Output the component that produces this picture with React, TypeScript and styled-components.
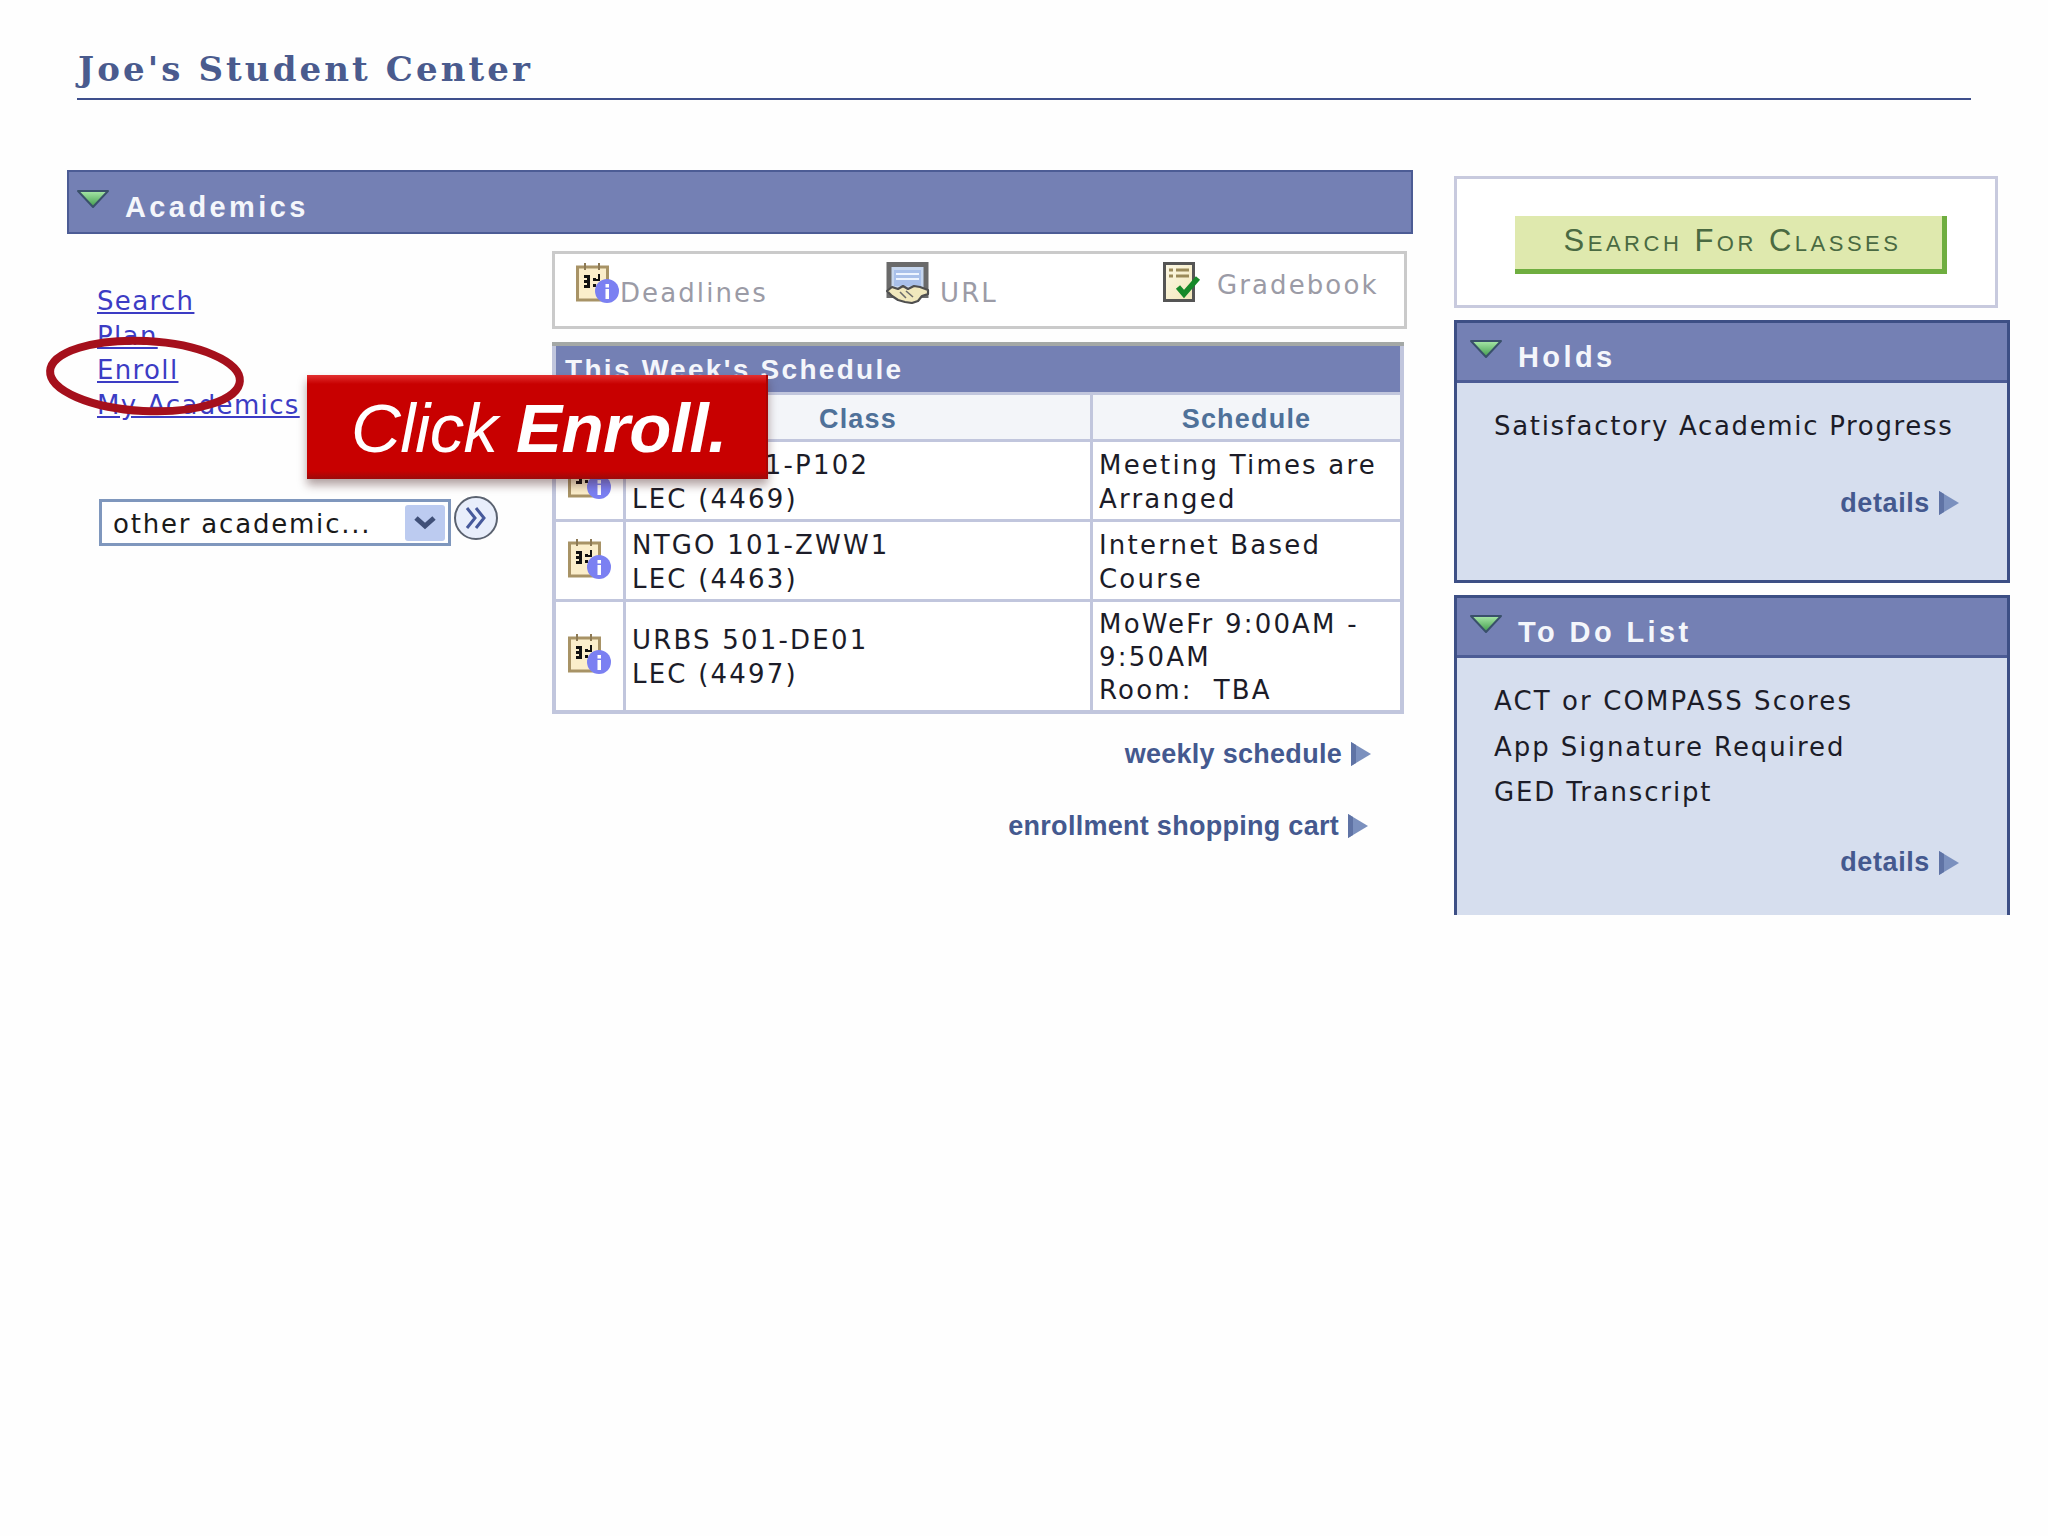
import * as React from 'react';
import styled, { createGlobalStyle } from 'styled-components';

const Global = createGlobalStyle`
  html, body { margin: 0; padding: 0; background: #fefefe; }
  body { font-family: "DejaVu Sans", Verdana, sans-serif; }
`;

const Page = styled.div`
  position: relative;
  width: 2048px;
  height: 1536px;
  padding: 47px 0 0 67px;
  box-sizing: border-box;
  overflow: hidden;
`;

const Title = styled.h1`
  margin: 0 0 70px 10px;
  padding-left: 1px;
  width: 1893px;
  height: 51px;
  border-bottom: 2px solid #3e4f8c;
  font-family: "DejaVu Serif", serif;
  font-size: 34px;
  line-height: 44px;
  font-weight: bold;
  letter-spacing: 3.1px;
  color: #4a5b8e;
`;

const Columns = styled.div`
  display: flex;
  gap: 41px;
  align-items: flex-start;
`;

const Main = styled.section`
  width: 1346px;
`;

const Side = styled.aside`
  width: 556px;
  padding-top: 6px;
  display: flex;
  flex-direction: column;
  gap: 12px;
`;

const Bar = styled.header<{ $flat?: boolean }>`
  display: flex;
  align-items: flex-start;
  height: ${p => (p.$flat ? 60 : 64)}px;
  box-sizing: border-box;
  background: #7480b4;
  border: 2px solid #4c5c95;
  border-width: ${p => (p.$flat ? '0 0 3px 0' : '2px')};
  padding: ${p => (p.$flat ? '16px 0 0 12px' : '17px 0 0 7px')};
  h2 {
    margin: ${p => (p.$flat ? 1 : 1)}px 0 0 15px;
    font-family: "Liberation Sans", sans-serif;
    font-size: 29px;
    line-height: 34px;
    letter-spacing: 3.4px;
    font-weight: bold;
    color: #f4f6fb;
  }
`;

const AcademicsBody = styled.div`
  display: flex;
  margin-top: 17px;
`;

const LeftNav = styled.div`
  width: 485px;
  box-sizing: border-box;
  padding: 33px 0 0 30px;
`;

const NavLink = styled.a`
  display: block;
  width: fit-content;
  height: 34.5px;
  font-size: 26px;
  line-height: 34px;
  letter-spacing: 1.35px;
  color: #3c3cc4;
  text-decoration: underline;
`;

const SelectRow = styled.div`
  display: flex;
  align-items: flex-start;
  gap: 3px;
  margin: 77px 0 0 2px;
`;

const SelectBox = styled.div`
  width: 352px;
  height: 47px;
  box-sizing: border-box;
  border: 3px solid #7f97bd;
  background: #fff;
  display: flex;
  align-items: center;
  justify-content: space-between;
  padding: 0 3px 0 11px;
  font-size: 26px;
  letter-spacing: 1.8px;
  color: #1a1a1a;
`;

const SelectText = styled.span`
  padding-top: 3px;
`;

const SelectArrow = styled.span`
  display: flex;
  align-items: center;
  justify-content: center;
  width: 40px;
  height: 36px;
  border-radius: 3px;
  background: #bccbf0;
`;

const GoButton = styled.span`
  margin-top: -3px;
  width: 44px;
  height: 44px;
  box-sizing: border-box;
  border: 2px solid #5a6270;
  border-radius: 50%;
  background: #e8eefb;
  display: flex;
  align-items: center;
  justify-content: center;
`;

const Content = styled.div`
  width: 855px;
`;

const Tabs = styled.div`
  display: grid;
  grid-template-columns: 310px 277px 1fr;
  height: 78px;
  box-sizing: border-box;
  border: 3px solid #cacaca;
  padding: 8px 0 0 21px;
  background: #fff;
`;

const TabItem = styled.div<{ $gap: number }>`
  display: flex;
  align-items: flex-start;
  gap: ${p => p.$gap}px;
`;

const TabLabel = styled.span<{ $top: number }>`
  margin-top: ${p => p.$top}px;
  font-size: 26px;
  line-height: 34px;
  letter-spacing: 2.1px;
  color: #9b9ba6;
`;

const Schedule = styled.div`
  margin-top: 13px;
  width: 852px;
  box-sizing: border-box;
  background: #c1c6dd;
  border-top: 4px solid #a4a8a6;
  padding: 0 4px 4px;
  display: grid;
  grid-template-columns: 67px 464px 1fr;
  grid-template-rows: 46px 44px 77px 77px 108px;
  gap: 3px;
`;

const Band = styled.div`
  grid-column: 1 / -1;
  background: #7480b4;
  padding-left: 9px;
  font-family: "Liberation Sans", sans-serif;
  font-size: 28px;
  line-height: 48px;
  font-weight: bold;
  letter-spacing: 2.3px;
  color: #f4f6fb;
`;

const HeadCell = styled.div`
  background: #f3f5f9;
  text-align: center;
  font-family: "Liberation Sans", sans-serif;
  font-size: 27px;
  line-height: 49px;
  font-weight: bold;
  letter-spacing: 1.2px;
  color: #4f7199;
`;

const IconCell = styled.div`
  background: #fff;
  display: flex;
  align-items: center;
  justify-content: center;
  padding-bottom: 4px;
`;

const TextCell = styled.div<{ $line: number }>`
  background: #fff;
  display: flex;
  flex-direction: column;
  justify-content: center;
  padding: 2px 0 0 6px;
  font-size: 26px;
  line-height: ${p => p.$line}px;
  letter-spacing: 2.2px;
  color: #1c1c28;
  white-space: pre;
`;

const MoreLink = styled.div<{ $right: number; $top: number }>`
  display: flex;
  justify-content: flex-end;
  align-items: center;
  gap: 8px;
  margin: ${p => p.$top}px ${p => p.$right}px 0 0;
  height: 34px;
  font-family: "Liberation Sans", sans-serif;
  font-size: 27px;
  font-weight: bold;
  letter-spacing: 0.28px;
  color: #44598f;
`;

const SearchBox = styled.div`
  width: 544px;
  height: 132px;
  box-sizing: border-box;
  border: 3px solid #c8cade;
  background: #fff;
  padding: 37px 0 0 58px;
`;

const SearchButton = styled.div`
  width: 432px;
  height: 58px;
  box-sizing: border-box;
  background: #dfe9ae;
  border-right: 5px solid #6fae40;
  border-bottom: 5px solid #6fae40;
  padding-left: 8px;
  text-align: center;
  font-family: "Liberation Sans", sans-serif;
  font-size: 31px;
  font-variant: small-caps;
  line-height: 50px;
  letter-spacing: 3.5px;
  color: #4a6a42;
`;

const Panel = styled.div<{ $height: number; $open?: boolean }>`
  height: ${p => p.$height}px;
  box-sizing: border-box;
  background: #d6deee;
  border: 3px solid #3d4f85;
  border-bottom: ${p => (p.$open ? 'none' : '3px solid #3d4f85')};
`;

const PanelBody = styled.div<{ $top: number }>`
  padding: ${p => p.$top}px 47px 0 37px;
`;

const PanelLine = styled.div<{ $height: number; $spacing: number }>`
  font-size: 26px;
  line-height: ${p => p.$height}px;
  letter-spacing: ${p => p.$spacing}px;
  color: #1c1c28;
`;

const Details = styled(MoreLink)`
  margin-right: 0;
  letter-spacing: 0.6px;
`;

const ClickCallout = styled.div`
  position: absolute;
  left: 307px;
  top: 375px;
  width: 461px;
  height: 104px;
  box-sizing: border-box;
  background: linear-gradient(#e23030 0, #c80000 9px, #c80000 96px, #9c0a0a 100%);
  border-right: 2px solid #a80505;
  box-shadow: 0 6px 9px rgba(60, 20, 20, 0.4);
  padding: 6px 0 0 44px;
  font-family: "Liberation Sans", sans-serif;
  font-size: 69px;
  line-height: 96px;
  font-style: italic;
  letter-spacing: -0.6px;
  color: #fff;
  b { font-weight: bold; }
`;

const Ring = styled.svg`
  position: absolute;
  left: 44px;
  top: 332px;
`;

const Triangle = () => (
  <svg width="34" height="20" viewBox="0 0 34 20">
    <defs>
      <linearGradient id="tri" x1="0" y1="0" x2="0" y2="1">
        <stop offset="0" stopColor="#a8e8a8" />
        <stop offset="1" stopColor="#3f9a4a" />
      </linearGradient>
    </defs>
    <path d="M2 2 H32 L17 18 Z" fill="url(#tri)" stroke="#39506a" strokeWidth="2" strokeLinejoin="round" />
  </svg>
);

const Arrow = () => (
  <svg width="22" height="26" viewBox="0 0 22 26">
    <path d="M1 1 L21 13 L1 25 Z" fill="#7b90be" />
    <path d="M1 1 V25 L6 22 V4 Z" fill="#5f73a5" />
  </svg>
);

const CalendarInfo = () => (
  <svg width={44} height={42} viewBox="0 0 44 42">
    <rect x="1.5" y="5" width="30" height="33" fill="#fbeecb" stroke="#a89366" strokeWidth="3" />
    <path d="M9 1 V8 M23 1 V8" stroke="#8d7a55" strokeWidth="2" />
    <path d="M8 13 H14 V26 H8 V23 H11 V21 H8 V18 H11 V16 H8 Z M17 16 H20 V19 H17 Z M17 22 H20 V25 H17 Z M22 12 H24 V19 H20 V17 H22 Z" fill="#111" />
    <circle cx="31" cy="29" r="12" fill="#7b80f2" />
    <rect x="29.5" y="22" width="3.5" height="3.5" fill="#fff" />
    <rect x="29.5" y="27" width="3.5" height="10" fill="#fff" />
  </svg>
);

const UrlIcon = () => (
  <svg width="44" height="42" viewBox="0 0 44 42">
    <rect x="3" y="2.5" width="37" height="31" fill="#c6d6ee" stroke="#6a6a6a" strokeWidth="5" />
    <rect x="8" y="8" width="27" height="16" fill="#a9c0ea" />
    <path d="M10 12 H33 M10 17 H33" stroke="#eef4ff" strokeWidth="2" />
    <path d="M1 29 L6 25 L12 27 L17 24 L22 27 L28 24 L34 25 L42 28 L42 32 L36 34 L32 39 L26 41 L19 40 L12 38 L6 34 Z" fill="#f1e8bd" stroke="#4f4f4f" strokeWidth="2.2" strokeLinejoin="round" />
    <path d="M14 30 L20 36 M20 29 L27 35" stroke="#6b6b6b" strokeWidth="1.6" />
  </svg>
);

const GradeIcon = () => (
  <svg width="38" height="40" viewBox="0 0 38 40">
    <defs>
      <linearGradient id="paper" x1="0" y1="0" x2="1" y2="1">
        <stop offset="0" stopColor="#fdf9e6" />
        <stop offset="1" stopColor="#f2e6b8" />
      </linearGradient>
    </defs>
    <rect x="1.5" y="1.5" width="29" height="37" fill="url(#paper)" stroke="#555" strokeWidth="3" />
    <path d="M6 8 H10 M13 8 H26 M6 14 H10 M13 14 H26" stroke="#9b8a58" strokeWidth="3" />
    <path d="M15 25 L21 32 L35 16" fill="none" stroke="#17892a" strokeWidth="5.5" />
  </svg>
);

const Chevron = () => (
  <svg width="24" height="18" viewBox="0 0 24 18">
    <path d="M3 4 L12 12 L21 4" fill="none" stroke="#3f4f78" strokeWidth="5" />
  </svg>
);

const DoubleChevron = () => (
  <svg width="24" height="26" viewBox="0 0 24 26">
    <path d="M3 3 L11 13 L3 23 M12 3 L20 13 L12 23" fill="none" stroke="#46599b" strokeWidth="3" />
  </svg>
);

const rows = [
  { cls: ['NTGO 101-P102', 'LEC (4469)'], sched: ['Meeting Times are', 'Arranged'], line: 34 },
  { cls: ['NTGO 101-ZWW1', 'LEC (4463)'], sched: ['Internet Based', 'Course'], line: 34 },
  { cls: ['URBS 501-DE01', 'LEC (4497)'], sched: ['MoWeFr 9:00AM -', '9:50AM', 'Room:  TBA'], line: 33 },
];

const App: React.FC = () => (
  <Page>
    <Global />
    <Title>Joe's Student Center</Title>
    <Columns>
      <Main>
        <Bar>
          <Triangle />
          <h2>Academics</h2>
        </Bar>
        <AcademicsBody>
          <LeftNav>
            <NavLink>Search</NavLink>
            <NavLink>Plan</NavLink>
            <NavLink>Enroll</NavLink>
            <NavLink>My Academics</NavLink>
            <SelectRow>
              <SelectBox>
                <SelectText>other academic...</SelectText>
                <SelectArrow><Chevron /></SelectArrow>
              </SelectBox>
              <GoButton><DoubleChevron /></GoButton>
            </SelectRow>
          </LeftNav>
          <Content>
            <Tabs>
              <TabItem $gap={0}>
                <CalendarInfo />
                <TabLabel $top={14}>Deadlines</TabLabel>
              </TabItem>
              <TabItem $gap={10}>
                <UrlIcon />
                <TabLabel $top={14}>URL</TabLabel>
              </TabItem>
              <TabItem $gap={16}>
                <GradeIcon />
                <TabLabel $top={6}>Gradebook</TabLabel>
              </TabItem>
            </Tabs>
            <Schedule>
              <Band>This Week's Schedule</Band>
              <HeadCell />
              <HeadCell>Class</HeadCell>
              <HeadCell>Schedule</HeadCell>
              {rows.map((r, i) => (
                <React.Fragment key={i}>
                  <IconCell><CalendarInfo /></IconCell>
                  <TextCell $line={34}>
                    {r.cls.map((t, j) => <span key={j}>{t}</span>)}
                  </TextCell>
                  <TextCell $line={r.line}>
                    {r.sched.map((t, j) => <span key={j}>{t}</span>)}
                  </TextCell>
                </React.Fragment>
              ))}
            </Schedule>
            <MoreLink $right={35} $top={23}>weekly schedule <Arrow /></MoreLink>
            <MoreLink $right={38} $top={38}>enrollment shopping cart <Arrow /></MoreLink>
          </Content>
        </AcademicsBody>
      </Main>
      <Side>
        <SearchBox>
          <SearchButton>Search For Classes</SearchButton>
        </SearchBox>
        <Panel $height={263}>
          <Bar $flat>
            <Triangle />
            <h2>Holds</h2>
          </Bar>
          <PanelBody $top={26}>
            <PanelLine $height={35} $spacing={1.67}>Satisfactory Academic Progress</PanelLine>
            <Details $right={0} $top={42}>details <Arrow /></Details>
          </PanelBody>
        </Panel>
        <Panel $height={320} $open>
          <Bar $flat>
            <Triangle />
            <h2>To Do List</h2>
          </Bar>
          <PanelBody $top={21}>
            <PanelLine $height={45.5} $spacing={2.1}>ACT or COMPASS Scores</PanelLine>
            <PanelLine $height={45.5} $spacing={1.95}>App Signature Required</PanelLine>
            <PanelLine $height={45.5} $spacing={1.85}>GED Transcript</PanelLine>
            <Details $right={0} $top={30}>details <Arrow /></Details>
          </PanelBody>
        </Panel>
      </Side>
    </Columns>
    <Ring width="204" height="88" viewBox="0 0 204 88">
      <ellipse cx="101" cy="44" rx="95" ry="35" fill="none" stroke="#a5101c" strokeWidth="8" transform="rotate(3 101 44)" />
    </Ring>
    <ClickCallout>Click <b>Enroll.</b></ClickCallout>
  </Page>
);

export default App;
